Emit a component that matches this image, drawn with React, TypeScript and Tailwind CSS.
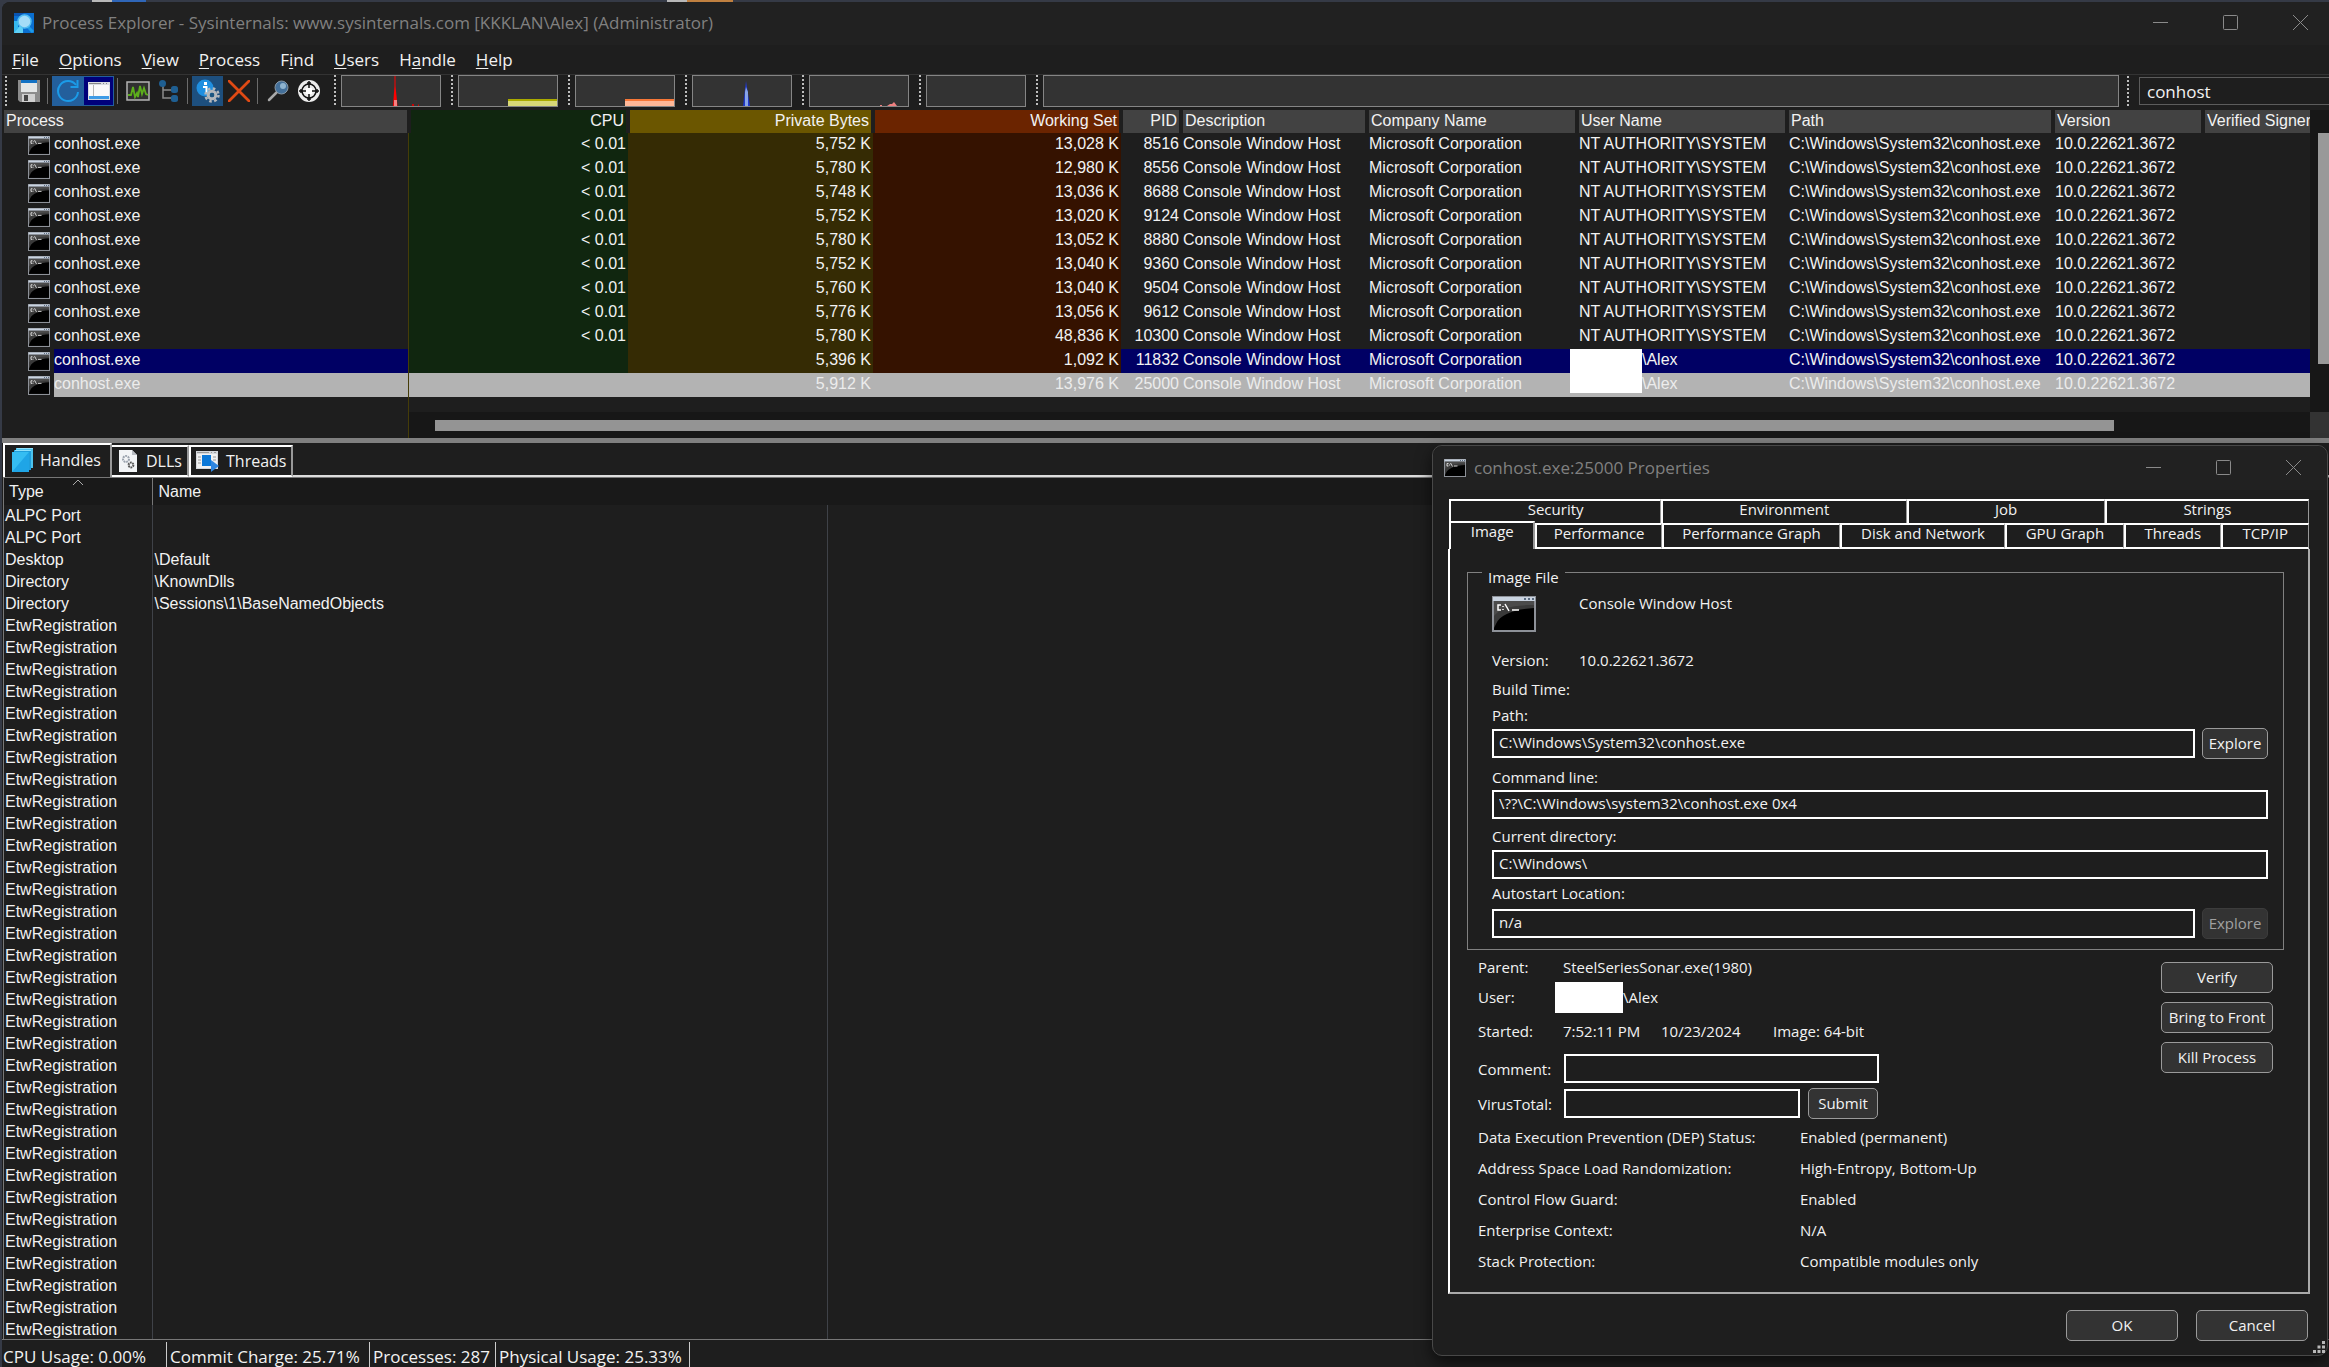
import type { ReactNode } from 'react';

type Proc = { cpu: string; priv: string; ws: string; pid: string; user: string; state?: 'selected' | 'exiting' };

const SYS = 'NT AUTHORITY\\SYSTEM';
const processes: Proc[] = [
  { cpu: '< 0.01', priv: '5,752 K', ws: '13,028 K', pid: '8516', user: SYS },
  { cpu: '< 0.01', priv: '5,780 K', ws: '12,980 K', pid: '8556', user: SYS },
  { cpu: '< 0.01', priv: '5,748 K', ws: '13,036 K', pid: '8688', user: SYS },
  { cpu: '< 0.01', priv: '5,752 K', ws: '13,020 K', pid: '9124', user: SYS },
  { cpu: '< 0.01', priv: '5,780 K', ws: '13,052 K', pid: '8880', user: SYS },
  { cpu: '< 0.01', priv: '5,752 K', ws: '13,040 K', pid: '9360', user: SYS },
  { cpu: '< 0.01', priv: '5,760 K', ws: '13,040 K', pid: '9504', user: SYS },
  { cpu: '< 0.01', priv: '5,776 K', ws: '13,056 K', pid: '9612', user: SYS },
  { cpu: '< 0.01', priv: '5,780 K', ws: '48,836 K', pid: '10300', user: SYS },
  { cpu: '', priv: '5,396 K', ws: '1,092 K', pid: '11832', user: '\\Alex', state: 'selected' },
  { cpu: '', priv: '5,912 K', ws: '13,976 K', pid: '25000', user: '\\Alex', state: 'exiting' },
];

const handles: [string, string][] = [
  ['ALPC Port', ''],
  ['ALPC Port', ''],
  ['Desktop', '\\Default'],
  ['Directory', '\\KnownDlls'],
  ['Directory', '\\Sessions\\1\\BaseNamedObjects'],
  ...Array.from({ length: 33 }, (): [string, string] => ['EtwRegistration', '']),
];

const menus: [string, string, string][] = [
  ['', 'F', 'ile'],
  ['', 'O', 'ptions'],
  ['', 'V', 'iew'],
  ['', 'P', 'rocess'],
  ['F', 'i', 'nd'],
  ['', 'U', 'sers'],
  ['H', 'a', 'ndle'],
  ['', 'H', 'elp'],
];

/* ---------- icons ---------- */

function ConsoleIcon({ className }: { className: string }) {
  return (
    <svg viewBox="0 0 44 36" preserveAspectRatio="none" className={className} aria-hidden="true">
      <rect x="1" y="1" width="42" height="34" fill="#000" stroke="#8d9198" strokeWidth="2" />
      <path d="M2 5H42V12C24 13 8 18 4 28L2 32Z" fill="#3a3a3a" />
      <path d="M2 5H42V9C20 9 8 12 2 20Z" fill="#4b4b4b" />
      <rect x="1" y="1" width="42" height="4" fill="#c9d3e0" />
      <path d="M32 3H34M36 3H38M40 3H42" stroke="#5a6b80" strokeWidth="2" />
      <path d="M9 9H6V14H9M11 10V11M11 13V14M13 8L17 15M20 14H27" stroke="#fff" strokeWidth="1.5" fill="none" />
    </svg>
  );
}

function AppIcon() {
  return (
    <svg viewBox="0 0 20 20" className="size-5" aria-hidden="true">
      <rect width="20" height="20" fill="#0a6fd0" />
      <path d="M0 8H4V14H9V20H0Z" fill="#35b8ee" />
      <path d="M0 0H10L6 3H0Z" fill="#0a54b0" />
      <path d="M14 14L19 19" stroke="#1d9be8" strokeWidth="3" />
      <circle cx="10.500" cy="8.500" r="6.500" fill="#a5ddf7" stroke="#53bdf0" strokeWidth="1.500" />
      <path d="M0 20L6 13L9 16V20Z" fill="#5fd0f5" />
    </svg>
  );
}

const SaveIcon = () => (
  <svg viewBox="0 0 22 22" className="size-[22px]" aria-hidden="true">
    <path d="M0 0H22V22H2L0 20Z" fill="#8c8c8c" />
    <rect x="3" y="0" width="16" height="12" fill="#e4e6e6" />
    <rect x="3" y="0" width="16" height="3" fill="#1372c4" />
    <rect x="4" y="14" width="13" height="8" fill="#d0d0d0" />
    <rect x="6" y="15" width="4" height="6" fill="#444" />
  </svg>
);

const RefreshIcon = () => (
  <svg viewBox="0 0 24 24" className="size-6" fill="none" stroke="#1b9be8" strokeWidth="2" aria-hidden="true">
    <path d="M20 6A10 10 0 1 0 22 13" />
    <path d="M21.500 1V8H14.500" />
  </svg>
);

const PaneIcon = () => (
  <svg viewBox="0 0 22 18" className="h-[18px] w-[22px]" aria-hidden="true">
    <rect width="22" height="18" fill="#d9dde2" />
    <path d="M1 1.500H13M15 1.500H16M18 1.500H19" stroke="#888" />
    <rect x="1" y="3" width="20" height="11" fill="#fafafa" />
    <rect x="5" y="3" width="1" height="11" fill="#b5b5b5" />
    <rect x="1" y="14" width="20" height="3" fill="#3d9be6" />
  </svg>
);

const GraphIcon = () => (
  <svg viewBox="0 0 24 20" className="h-5 w-6" aria-hidden="true">
    <rect x="1" y="1" width="22" height="18" fill="#303030" stroke="#b4b4b4" strokeWidth="1.500" />
    <path d="M2 14H5L7 6L9 16L11 12L12 16L14 5L16 13L18 7L20 13L22 14" fill="none" stroke="#5cae1b" strokeWidth="1.800" />
  </svg>
);

const TreeIcon = () => (
  <svg viewBox="0 0 20 22" className="h-[22px] w-5" aria-hidden="true">
    <path d="M4 5V18H13M4 10H13" fill="none" stroke="#8a8a8a" strokeWidth="1.500" />
    <circle cx="3.500" cy="3.500" r="3.500" fill="#1f5f92" />
    <rect x="12" y="6" width="7" height="7" rx="2.500" fill="#1f5f92" />
    <rect x="12" y="15" width="7" height="7" rx="2.500" fill="#1f5f92" />
  </svg>
);

const InfoIcon = () => (
  <svg viewBox="0 0 24 24" className="size-6" aria-hidden="true">
    <circle cx="9" cy="9" r="8.500" fill="#1f8fe0" />
    <rect x="8" y="3" width="3" height="3" fill="#fff" />
    <path d="M7 8H10.500V14" fill="none" stroke="#fff" strokeWidth="2" />
    <circle cx="16" cy="16" r="6.500" fill="none" stroke="#b4b8bc" strokeWidth="2.500" strokeDasharray="2.600 2.500" />
    <circle cx="16" cy="16" r="3.800" fill="none" stroke="#b4b8bc" strokeWidth="3" />
    <circle cx="16" cy="16" r="2.200" fill="#1d5680" />
  </svg>
);

const KillIcon = () => (
  <svg viewBox="0 0 22 22" className="size-[22px]" aria-hidden="true">
    <path d="M1 1L21 21M21 1L1 21" stroke="#e04a14" strokeWidth="2.800" strokeLinecap="round" />
  </svg>
);

const FindIcon = () => (
  <svg viewBox="0 0 22 22" className="size-[22px]" aria-hidden="true">
    <path d="M2 20L10 12" stroke="#a8a8a8" strokeWidth="2.500" strokeLinecap="round" />
    <circle cx="14.500" cy="7.500" r="6.500" fill="#44709a" stroke="#8a9aa8" />
    <circle cx="16" cy="6" r="3" fill="#8fb4d0" />
  </svg>
);

const TargetIcon = () => (
  <svg viewBox="0 0 22 22" className="size-[22px]" aria-hidden="true">
    <circle cx="11" cy="11" r="11" fill="#ececec" />
    <circle cx="11" cy="11" r="7" fill="none" stroke="#111" strokeWidth="1.500" />
    <rect x="8" y="8" width="6" height="6" fill="#fff" />
    <path d="M11 1V8M11 14V21M1 11H8M14 11H21" stroke="#111" strokeWidth="1.500" />
    <path d="M9 3H13M9 19H13M3 9V13M19 9V13" stroke="#111" strokeWidth="1.500" />
  </svg>
);

const HandlesIcon = () => (
  <svg viewBox="0 0 21 24" className="h-6 w-[21px]" aria-hidden="true">
    <path d="M4 0H21V20H4Z" fill="#4cc3ee" />
    <path d="M2 2H19V22H2Z" fill="#1f9fdc" />
    <path d="M3 2H19V3H3ZM5 0H21V1H5Z" fill="#8fe0fa" />
    <path d="M0 4H17V24H0Z" fill="#35bdf2" />
    <path d="M17 4V24H0Z" fill="#1fa5e6" />
  </svg>
);

const DllIcon = () => (
  <svg viewBox="0 0 18 22" className="h-[22px] w-[18px]" aria-hidden="true">
    <path d="M0 0H13L18 5V22H0Z" fill="#f2f4f6" />
    <path d="M13 0V5H18Z" fill="#b8bcc2" />
    <circle cx="7" cy="9" r="3" fill="none" stroke="#9aa2ad" strokeWidth="2" strokeDasharray="1.800 0.800" />
    <circle cx="12" cy="15" r="2.400" fill="none" stroke="#555" strokeWidth="2" strokeDasharray="1.600 0.700" />
  </svg>
);

const ThreadIcon = () => (
  <svg viewBox="0 0 23 21" className="h-[21px] w-[23px]" aria-hidden="true">
    <rect width="22" height="18" fill="#d5d8dc" />
    <rect x="1" y="3" width="20" height="14" fill="#f1f1f1" />
    <path d="M1 1.500H13M15 1.500H16M18 1.500H20" stroke="#999" />
    <path d="M2 6H5M2 9H5M2 12H5M17 6H20M17 9H20" stroke="#999" />
    <rect x="6" y="4" width="9" height="11" fill="#0b78d8" />
    <path d="M15 9L23 15L15 21Z" fill="#2f86e0" />
  </svg>
);

function WindowButtons() {
  return (
    <div className="flex gap-3 text-[#8a8a8a]">
      <button type="button" aria-label="Minimize" className="flex h-8 w-[58px] items-center justify-center">
        <svg viewBox="0 0 15 15" className="size-[15px]" stroke="currentColor"><path d="M0 7.500H15" /></svg>
      </button>
      <button type="button" aria-label="Maximize" className="flex h-8 w-[58px] items-center justify-center">
        <svg viewBox="0 0 15 15" className="size-[15px]" stroke="currentColor" fill="none"><rect x="0.500" y="0.500" width="14" height="14" rx="1" /></svg>
      </button>
      <button type="button" aria-label="Close" className="flex h-8 w-[58px] items-center justify-center">
        <svg viewBox="0 0 15 15" className="size-[15px]" stroke="currentColor"><path d="M0 0L15 15M15 0L0 15" /></svg>
      </button>
    </div>
  );
}

/* ---------- toolbar ---------- */

const Grip = () => (
  <div className="h-[31px] w-[2px] shrink-0 bg-[repeating-linear-gradient(to_bottom,#bdbdbd_0_2px,transparent_2px_4px)]" />
);
const Sep = () => <div className="ml-[3px] mr-1 h-[26px] w-px shrink-0 bg-[#6b6b6b]" />;

function Tool({ label, className = '', children }: { label: string; className?: string; children: ReactNode }) {
  return (
    <button type="button" aria-label={label} className={`flex h-[30px] w-[31px] shrink-0 items-center justify-center ${className}`}>
      {children}
    </button>
  );
}

function Chart({ wide = false, children }: { wide?: boolean; children?: ReactNode }) {
  return (
    <div className={wide ? 'ml-[10px] flex flex-1' : 'ml-[10px] flex shrink-0'}>
      <Grip />
      <div className={`ml-[5px] h-8 border border-[#858585] bg-[#333] ${wide ? 'flex-1' : 'w-[100px]'}`}>
        <svg viewBox="0 0 98 30" className="h-[30px] w-[98px]" aria-hidden="true">{children}</svg>
      </div>
    </div>
  );
}

function Toolbar() {
  return (
    <div className="flex h-9 items-center border-t border-[#333] pb-[3px] pl-[3px]">
      <Grip />
      <Tool label="Save" className="ml-[6px]"><SaveIcon /></Tool>
      <Sep />
      <Tool label="Refresh now" className="bg-[#235f9c]"><RefreshIcon /></Tool>
      <Tool label="Show lower pane" className="border border-[#235f9c] bg-[#00007a]"><PaneIcon /></Tool>
      <Sep />
      <Tool label="System information"><GraphIcon /></Tool>
      <Tool label="Show process tree"><TreeIcon /></Tool>
      <Sep />
      <Tool label="Properties" className="bg-[#1d4f7e]"><InfoIcon /></Tool>
      <Tool label="Kill process"><KillIcon /></Tool>
      <Sep />
      <Tool label="Find handle or DLL"><FindIcon /></Tool>
      <Tool label="Find window's process"><TargetIcon /></Tool>
      <Chart>
        <path d="M51 30L52.500 10V0H53.500V10L55.500 30Z" fill="#f00" />
        <path d="M52 30V24H55V30Z" fill="#f88080" />
        <path d="M70 29H72M76 29.500H77" stroke="#c00" strokeWidth="2" />
      </Chart>
      <Chart>
        <rect x="49" y="23" width="49" height="7" fill="#d8d878" />
        <rect x="49" y="23" width="49" height="2" fill="#aaaa00" />
      </Chart>
      <Chart>
        <rect x="49" y="23" width="49" height="7" fill="#ffb898" />
        <rect x="49" y="23" width="49" height="2" fill="#f87838" />
      </Chart>
      <Chart>
        <path d="M50 30L53 5L57 30Z" fill="#2038c8" />
        <path d="M52 30V16L53 11L55 16V30Z" fill="#88a4e8" />
      </Chart>
      <Chart>
        <path d="M77 30L80 28H82L84 26L87 30ZM70 29H72V30H70Z" fill="#f08080" />
      </Chart>
      <Chart />
      <Chart wide />
      <div className="ml-2 flex"><Grip /></div>
      <input
        aria-label="Filter by name"
        defaultValue="conhost"
        className="ml-[10px] h-7 w-[190px] shrink-0 border border-r-0 border-[#5c5c5c] bg-[#1e1e1e] px-[7px] font-['Open_Sans',sans-serif] text-[17px] outline-none"
      />
    </div>
  );
}

/* ---------- process table ---------- */

const headers: [string, string][] = [
  ['Process', 'bg-[#424242]'],
  ['CPU', 'bg-[#10260f] text-right'],
  ['Private Bytes', 'bg-[#6b5600] text-right'],
  ['Working Set', 'bg-[#6b2400] text-right'],
  ['PID', 'bg-[#424242] text-right'],
  ['Description', 'bg-[#424242]'],
  ['Company Name', 'bg-[#424242]'],
  ['User Name', 'bg-[#424242]'],
  ['Path', 'bg-[#424242]'],
  ['Version', 'bg-[#424242]'],
  ['Verified Signer', 'bg-[#424242]'],
];

function ProcessRow({ p }: { p: Proc }) {
  const exiting = p.state === 'exiting';
  const row = exiting ? 'bg-[#b3b3b3] text-[#ececec]' : p.state === 'selected' ? 'bg-[#000064]' : '';
  return (
    <tr className={`h-6 ${row}`}>
      <td className="border-r border-[#453c08] bg-[#1e1e1e] p-0">
        <div className="flex h-6 items-center pl-[26px]">
          <ConsoleIcon className="mr-1 h-[19px] w-[22px]" />
          <span className={`h-6 flex-1 ${row}`}>conhost.exe</span>
        </div>
      </td>
      <td className={`pr-[2px] text-right ${exiting ? '' : 'bg-[#10260f]'}`}>{p.cpu}</td>
      <td className={`pr-[2px] text-right ${exiting ? '' : 'bg-[#352b04]'}`}>{p.priv}</td>
      <td className={`pr-[2px] text-right ${exiting ? '' : 'bg-[#351200]'}`}>{p.ws}</td>
      <td className="pr-[2px] text-right">{p.pid}</td>
      <td className="px-[2px]">Console Window Host</td>
      <td className="px-[2px]">Microsoft Corporation</td>
      <td className="relative px-[2px]">
        {p.state ? (
          <>
            <span className={`absolute top-0 -left-[7px] w-[72px] bg-white ${exiting ? 'h-5' : 'h-6'}`} />
            <span className="pl-[63px]">{p.user}</span>
          </>
        ) : (
          p.user
        )}
      </td>
      <td className="px-[2px]">C:\Windows\System32\conhost.exe</td>
      <td className="px-[2px]">10.0.22621.3672</td>
      <td />
    </tr>
  );
}

function ProcessPane() {
  return (
    <>
      <div className="flex">
        <div className="min-w-0 flex-1">
          <table className="w-full table-fixed border-separate border-spacing-0 leading-[22px] whitespace-nowrap">
            <colgroup>
              <col className="w-[407px]" />
              <col className="w-[219px]" />
              <col className="w-[245px]" />
              <col className="w-[248px]" />
              <col className="w-[60px]" />
              <col className="w-[186px]" />
              <col className="w-[210px]" />
              <col className="w-[210px]" />
              <col className="w-[266px]" />
              <col className="w-[150px]" />
              <col />
            </colgroup>
            <thead>
              <tr>
                {headers.map(([h, c], i) => (
                  <th key={h} className={`p-0 text-left font-normal ${i === 10 ? 'pl-[2px]' : 'px-[2px]'}`}>
                    <div className={`h-[23px] overflow-hidden px-[2px] ${c}`}>{h}</div>
                  </th>
                ))}
              </tr>
            </thead>
            <tbody className="align-top">
              {processes.map((p) => <ProcessRow key={p.pid} p={p} />)}
            </tbody>
          </table>
          <div className="h-[15px] w-[407px] border-r border-[#453c08]" />
        </div>
        <div className="w-[19px] bg-[#171717] pt-[23px] pl-2">
          <div className="h-[231px] bg-[#999]" />
        </div>
      </div>
      <div className="flex h-[26px]">
        <div className="w-[407px] border-r border-[#453c08]" />
        <div className="flex flex-1 items-center bg-[#171717] pr-[196px] pl-[26px]">
          <div className="h-[11px] flex-1 bg-[#949494]" />
        </div>
        <div className="w-[19px] bg-[#333]" />
      </div>
    </>
  );
}

/* ---------- lower pane ---------- */

function LowerPane() {
  return (
    <div className="flex min-h-0 flex-1 flex-col">
      <div role="tablist" className="flex h-[34px] items-end pl-px font-['Open_Sans',sans-serif] text-base leading-6">
        <button type="button" role="tab" aria-selected="true" className="flex h-[34px] w-[109px] items-center gap-[7px] border-2 border-b-0 border-white border-r-[#999] pb-[3px] pl-[7px]">
          <HandlesIcon />Handles
        </button>
        <button type="button" role="tab" aria-selected="false" className="flex h-8 w-[77px] items-center gap-[9px] border-2 border-l-0 border-white border-r-[#999] pl-[7px]">
          <DllIcon />DLLs
        </button>
        <button type="button" role="tab" aria-selected="false" className="flex h-8 w-[104px] items-center gap-[7px] border-2 border-white border-r-[#999] pl-[5px]">
          <ThreadIcon />Threads
        </button>
        <div className="h-[2px] flex-1 bg-[#ddd]" />
      </div>
      <div className="ml-px min-h-0 flex-1 overflow-hidden border-l border-[#777]">
        <table className="w-full table-fixed border-collapse leading-[22px] whitespace-nowrap">
          <colgroup>
            <col className="w-[148px]" />
            <col className="w-[675px]" />
            <col />
          </colgroup>
          <thead className="bg-[#191919] text-left">
            <tr className="h-[27px] border-t border-[#777]">
              <th className="relative border-r border-[#777] p-0 pt-px pl-[5px] font-normal">
                Type
                <svg viewBox="0 0 12 6" className="absolute top-px left-[68px] h-[6px] w-3" fill="none" stroke="#aaa"><path d="M1 6L6 1L11 6" /></svg>
              </th>
              <th className="p-0 pt-px pl-[6px] font-normal">Name</th>
              <th />
            </tr>
          </thead>
          <tbody>
            {handles.map(([type, name], i) => (
              <tr key={i} className="h-[22px]">
                <td className="border-r border-[#3f4248] p-0 pl-px">{type}</td>
                <td className="border-r border-[#3f4248] p-0 pl-[2px]">{name}</td>
                <td />
              </tr>
            ))}
          </tbody>
        </table>
      </div>
      <div className="flex h-7 shrink-0 border-t border-[#777] pt-[2px] font-['Open_Sans',sans-serif] text-[17px] leading-5 whitespace-nowrap">
        <div className="w-[165px] border-r border-[#ccc] pt-[5px] pl-px">CPU Usage: 0.00%</div>
        <div className="w-[203px] border-r border-[#ccc] pt-[5px] pl-[3px]">Commit Charge: 25.71%</div>
        <div className="w-[126px] border-r border-[#ccc] pt-[5px] pl-[3px]">Processes: 287</div>
        <div className="w-[194px] border-r border-[#ccc] pt-[5px] pl-[3px]">Physical Usage: 25.33%</div>
      </div>
    </div>
  );
}

/* ---------- properties dialog ---------- */

function PushButton({ className, disabled = false, children }: { className: string; disabled?: boolean; children: ReactNode }) {
  return (
    <button
      type="button"
      disabled={disabled}
      className={`h-[31px] shrink-0 rounded-[5px] border bg-[#333] pb-[2px] whitespace-nowrap ${disabled ? 'border-[#3c3c3c] text-[#a0a0a0]' : 'border-[#9a9a9a]'} ${className}`}
    >
      {children}
    </button>
  );
}

function TextBox({ id, value = '', className }: { id: string; value?: string; className: string }) {
  return <input id={id} defaultValue={value} className={`h-[29px] border-2 border-white bg-[#1e1e1e] px-[5px] pb-1 outline-none ${className}`} />;
}

const dialogTab = 'h-6 border-t-2 border-l-2 border-r border-white border-r-[#999] pb-[6px] leading-4';

function PropertiesDialog() {
  return (
    <section
      role="dialog"
      aria-labelledby="dlg-title"
      className="absolute top-[445px] right-px flex w-[896px] flex-col rounded-[10px] border border-[#484848] bg-[#1e1e1e] font-['Open_Sans',sans-serif] text-[15px] leading-5 shadow-[0_6px_16px_rgba(0,0,0,0.6)]"
    >
      <header className="flex h-[44px] items-center rounded-t-[10px] bg-[#212121] pr-[5px] pb-px pl-[11px]">
        <ConsoleIcon className="mr-2 h-[18px] w-[22px]" />
        <h2 id="dlg-title" className="flex-1 text-[17px] text-[#808080]">conhost.exe:25000 Properties</h2>
        <WindowButtons />
      </header>

      <div role="tablist" className="mt-[9px] mr-[18px] ml-4">
        <div className="flex">
          <button type="button" role="tab" className={`${dialogTab} grow basis-[212px]`}>Security</button>
          <button type="button" role="tab" className={`${dialogTab} grow basis-[245px]`}>Environment</button>
          <button type="button" role="tab" className={`${dialogTab} grow basis-[198px]`}>Job</button>
          <button type="button" role="tab" className={`${dialogTab} grow basis-[204px]`}>Strings</button>
        </div>
        <div className="flex h-[26px] items-end">
          <button type="button" role="tab" aria-selected="true" className="-mt-[3px] h-[28px] grow basis-[86px] border-2 border-b-0 border-white border-r-[#999] bg-[#1e1e1e] pb-[10px] leading-4">Image</button>
          <button type="button" role="tab" className={`${dialogTab} h-[26px] grow basis-[126px] border-b-2 border-l-0`}>Performance</button>
          <button type="button" role="tab" className={`${dialogTab} h-[26px] grow basis-[178px] border-b-2`}>Performance Graph</button>
          <button type="button" role="tab" className={`${dialogTab} h-[26px] grow basis-[164px] border-b-2`}>Disk and Network</button>
          <button type="button" role="tab" className={`${dialogTab} h-[26px] grow basis-[119px] border-b-2`}>GPU Graph</button>
          <button type="button" role="tab" className={`${dialogTab} h-[26px] grow basis-[96px] border-b-2`}>Threads</button>
          <button type="button" role="tab" className={`${dialogTab} h-[26px] grow basis-[88px] border-b-2`}>TCP/IP</button>
        </div>
      </div>

      <div role="tabpanel" className="mr-[17px] ml-[15px] border-2 border-t-0 border-white border-r-[#aaa] border-b-[#aaa] pt-2 pr-6 pb-[21px] pl-[17px]">
        <fieldset className="flex flex-col border border-[#808080] px-0 pb-[10px]">
          <legend className="ml-[14px] px-[6px] pt-[10px]">Image File</legend>
          <div className="flex flex-col pt-[9px] pr-[15px] pl-6">
            <div className="flex h-[54px] items-start">
              <ConsoleIcon className="mr-[43px] h-9 w-[44px]" />
              <span className="-mt-[3px]">Console Window Host</span>
            </div>
            <div className="flex"><span className="w-[87px]">Version:</span><span>10.0.22621.3672</span></div>
            <div className="mt-[9px]">Build Time:</div>
            <label htmlFor="path" className="mt-[6px]">Path:</label>
            <div className="mt-[3px] flex items-center gap-[7px]">
              <TextBox id="path" value="C:\Windows\System32\conhost.exe" className="flex-1" />
              <PushButton className="w-[66px]">Explore</PushButton>
            </div>
            <label htmlFor="cmd" className="mt-2">Command line:</label>
            <TextBox id="cmd" value="\??\C:\Windows\system32\conhost.exe 0x4" className="mt-[3px]" />
            <label htmlFor="cwd" className="mt-[7px]">Current directory:</label>
            <TextBox id="cwd" value="C:\Windows\" className="mt-1" />
            <label htmlFor="auto" className="mt-1">Autostart Location:</label>
            <div className="mt-[5px] flex items-center gap-[7px]">
              <TextBox id="auto" value="n/a" className="flex-1" />
              <PushButton className="w-[66px]" disabled>Explore</PushButton>
            </div>
          </div>
        </fieldset>

        <div className="flex justify-between pr-[11px] pl-[11px]">
          <div>
            <div className="mt-[7px] flex"><span className="w-[85px]">Parent:</span><span>SteelSeriesSonar.exe(1980)</span></div>
            <div className="mt-[4px] flex h-8 items-center">
              <span className="w-[77px]">User:</span>
              <span className="h-[31px] w-[68px] bg-white" />
              <span>\Alex</span>
            </div>
            <div className="mt-2 flex">
              <span className="w-[85px]">Started:</span>
              <span className="w-[98px]">7:52:11 PM</span>
              <span className="w-[112px]">10/23/2024</span>
              <span>Image: 64-bit</span>
            </div>
            <div className="mt-[13px] flex items-center">
              <label htmlFor="comment" className="w-[86px]">Comment:</label>
              <TextBox id="comment" className="w-[315px]" />
            </div>
            <div className="mt-[5px] flex items-center">
              <label htmlFor="vt" className="w-[86px]">VirusTotal:</label>
              <TextBox id="vt" className="w-[236px]" />
              <PushButton className="ml-2 w-[70px]">Submit</PushButton>
            </div>
          </div>
          <div className="flex flex-col gap-[9px] pt-3">
            <PushButton className="w-[112px]">Verify</PushButton>
            <PushButton className="w-[112px]">Bring to Front</PushButton>
            <PushButton className="w-[112px]">Kill Process</PushButton>
          </div>
        </div>

        <dl className="mt-2 grid grid-cols-[322px_1fr] gap-y-[11px] pl-[11px]">
          <dt>Data Execution Prevention (DEP) Status:</dt><dd>Enabled (permanent)</dd>
          <dt>Address Space Load Randomization:</dt><dd>High-Entropy, Bottom-Up</dd>
          <dt>Control Flow Guard:</dt><dd>Enabled</dd>
          <dt>Enterprise Context:</dt><dd>N/A</dd>
          <dt>Stack Protection:</dt><dd>Compatible modules only</dd>
        </dl>
      </div>

      <footer className="relative flex justify-end gap-[18px] pt-4 pr-[19px] pb-[14px]">
        <PushButton className="w-[112px]">OK</PushButton>
        <PushButton className="w-[112px]">Cancel</PushButton>
        <svg viewBox="0 0 12 12" className="absolute right-[2px] bottom-[2px] size-3" fill="#b8b8b8" aria-hidden="true">
          <path d="M9 0h3v3h-3zM9 4.500h3v3h-3zM4.500 4.500h3v3h-3zM9 9h3v3h-3zM4.500 9h3v3h-3zM0 9h3v3h-3z" />
        </svg>
      </footer>
    </section>
  );
}

export default function App() {
  return (
    <div className="relative flex h-screen flex-col overflow-hidden bg-[#353a46] pl-[2px] font-['Liberation_Sans',sans-serif] text-base text-[#f2f2f2]">
      <div className="flex h-[2px] shrink-0">
        <div className="ml-[90px] w-5 bg-[#b8b8b8]" />
        <div className="w-[34px] bg-[#2f66b8]" />
        <div className="ml-[521px] w-5 bg-[#b8b8b8]" />
        <div className="w-[46px] bg-[#c08040]" />
      </div>
      <main className="flex min-h-0 flex-1 flex-col rounded-tl-lg bg-[#1e1e1e]">
        <header className="flex h-[43px] shrink-0 items-center rounded-tl-lg bg-[#212121] pb-[2px] pl-3 font-['Open_Sans',sans-serif] text-[17px] text-[#808080]">
          <AppIcon />
          <h1 className="ml-2 flex-1">Process Explorer - Sysinternals: www.sysinternals.com [KKKLAN\Alex] (Administrator)</h1>
          <WindowButtons />
        </header>
        <nav className="flex h-[29px] shrink-0 items-center gap-5 pl-[10px] font-['Open_Sans',sans-serif] text-[17px]">
          {menus.map(([a, b, c]) => (
            <button type="button" key={a + b + c}>
              {a}<span className="underline underline-offset-2">{b}</span>{c}
            </button>
          ))}
        </nav>
        <Toolbar />
        <ProcessPane />
        <div className="h-[5px] shrink-0 bg-[#808080]" />
        <LowerPane />
      </main>
      <PropertiesDialog />
    </div>
  );
}
